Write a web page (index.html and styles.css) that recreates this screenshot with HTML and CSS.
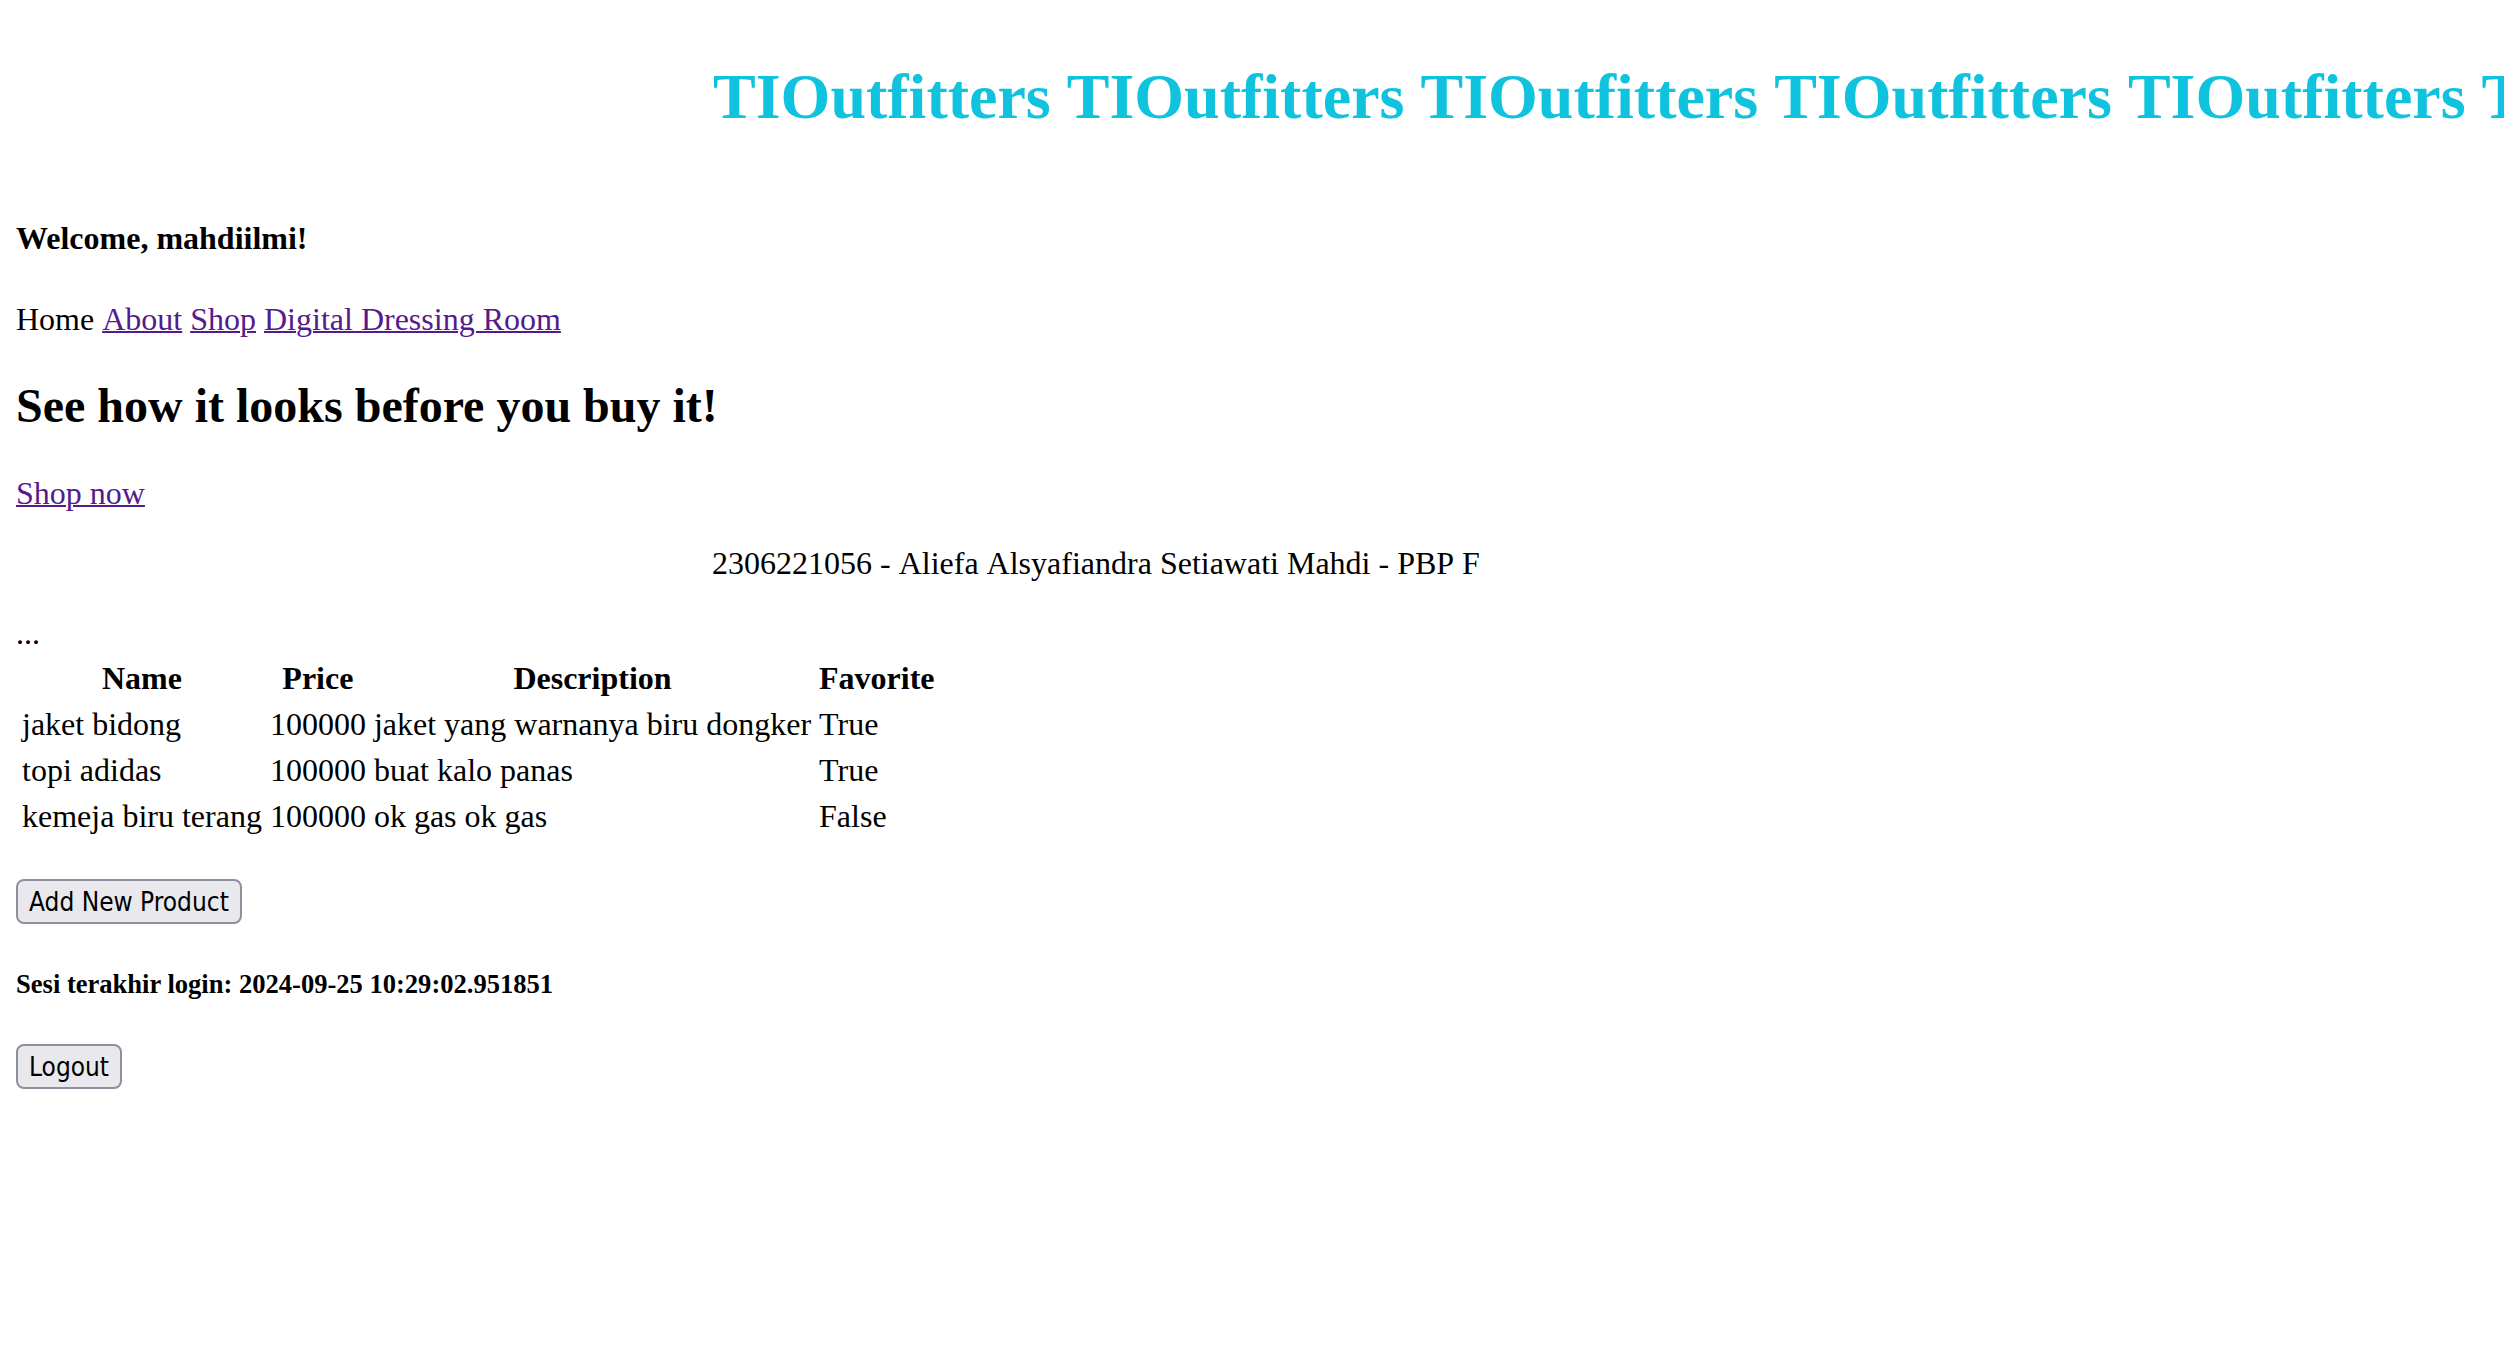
FILE: index.html
```html
<!DOCTYPE html>
<html lang="en">
<head>
<meta charset="utf-8">
<title>TIOutfitters</title>
<link rel="stylesheet" href="styles.css">
</head>
<body>
<div class="ticker"><h1 class="ticker-text">TIOutfitters TIOutfitters TIOutfitters TIOutfitters TIOutfitters TIOutfitters</h1></div>
<h4 class="welcome">Welcome, mahdiilmi!</h4>
<nav class="nav">Home <a href="#about">About</a> <a href="#shop">Shop</a> <a href="#room">Digital Dressing Room</a></nav>
<h2 class="headline">See how it looks before you buy it!</h2>
<a class="shop-link" href="#shop">Shop now</a>
<p class="author">2306221056 - Aliefa Alsyafiandra Setiawati Mahdi - PBP F</p>
<div>...</div>
<table class="products">
<thead><tr><th>Name</th><th>Price</th><th>Description</th><th>Favorite</th></tr></thead>
<tbody>
<tr><td>jaket bidong</td><td>100000</td><td>jaket yang warnanya biru dongker</td><td>True</td></tr>
<tr><td>topi adidas</td><td>100000</td><td>buat kalo panas</td><td>True</td></tr>
<tr><td>kemeja biru terang</td><td>100000</td><td>ok gas ok gas</td><td>False</td></tr>
</tbody>
</table>
<button class="button add" type="button">Add New Product</button>
<h5 class="session">Sesi terakhir login: 2024-09-25 10:29:02.951851</h5>
<button class="button" type="button">Logout</button>
</body>
</html>
```
FILE: styles.css
```css
body {
  margin: 0 16px;
  background: #fff;
  color: #000;
  font: 32px/36px "Liberation Serif", "Times New Roman", serif;
}
a { color: #551a8b; text-decoration-thickness: 2px; }
.ticker { overflow: hidden; padding: 60px 0 0 697px; }
.ticker-text {
  margin: 0;
  color: #0fc3de;
  font-size: 64px;
  line-height: 74px;
  white-space: nowrap;
}
.ticker-text, .nav, .author { font-kerning: none; }
.welcome { margin: 86px 0 0; font-size: 32px; }
.nav { margin-top: 45px; }
.headline { margin: 41px 0; font-size: 48px; line-height: 56px; }
.author { margin: 34px 0; padding-left: 696px; }
.products { margin-top: 2px; border-spacing: 4px; }
.products th, .products td { padding: 2px; line-height: 38px; }
.products td { text-align: left; }
.button {
  display: block;
  height: 45px;
  padding: 0 11px;
  border: 2px solid #8f8f9d;
  border-radius: 8px;
  background: #e9e9ed;
  color: #000;
  font: 26px/40px "DejaVu Sans Condensed", "Tahoma", "Noto Sans", sans-serif;
}
.add { margin-top: 38px; }
.session { margin: 42px 0; }
```
